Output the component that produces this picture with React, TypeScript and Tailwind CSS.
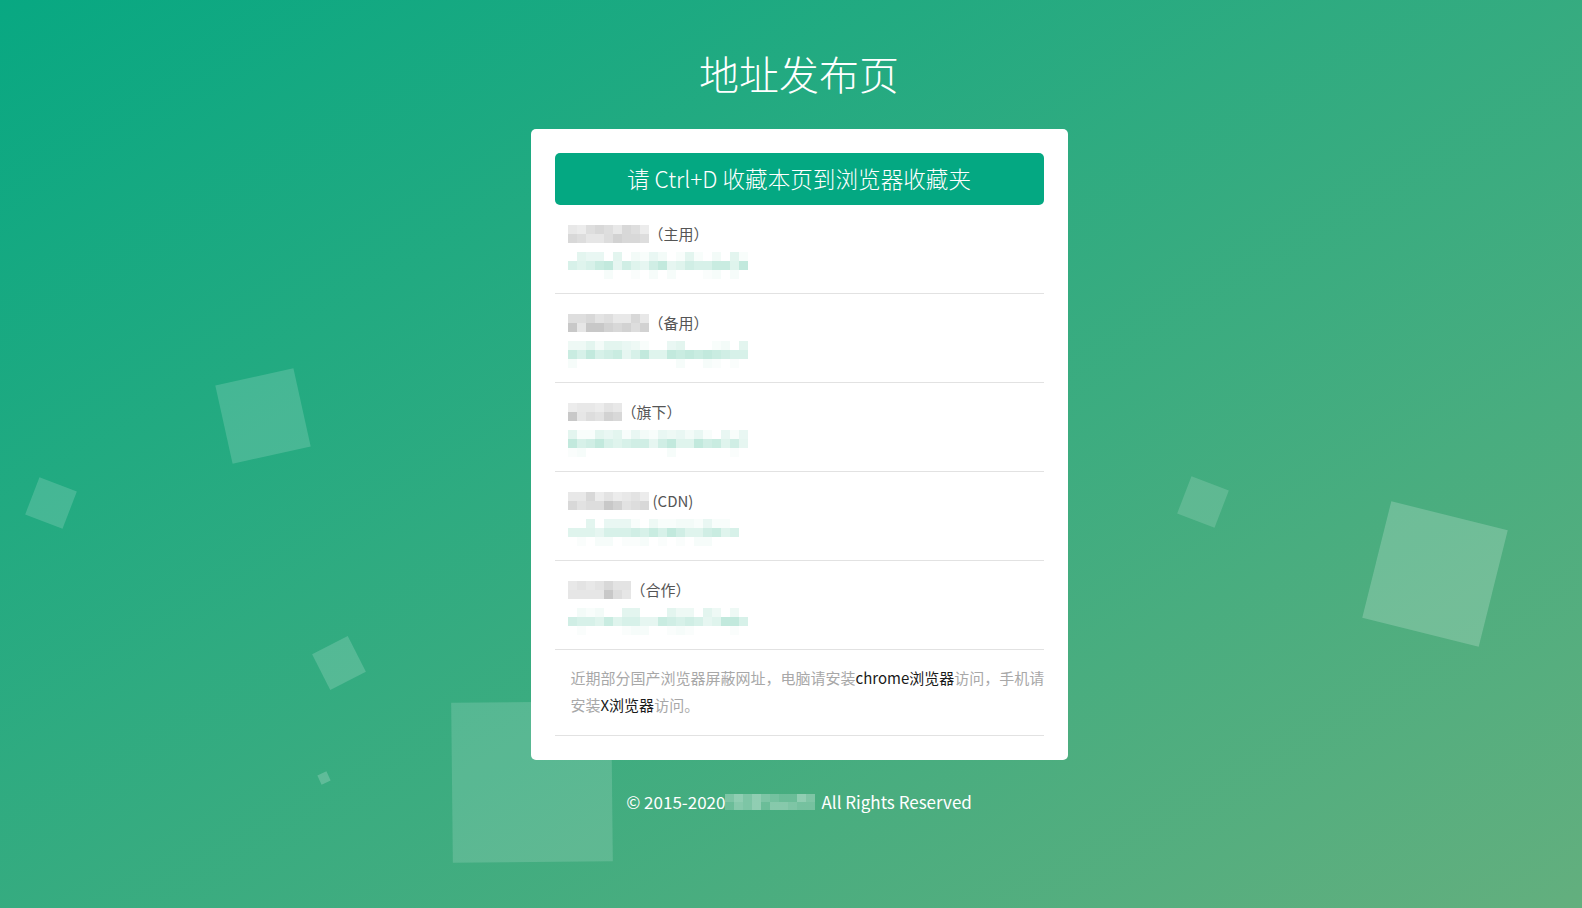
import React from "react";

const GRAY = [
  "bg-[#c8c8c8]",
  "bg-[#d2d2d2]",
  "bg-[#d8d8d8]",
  "bg-[#dddddd]",
  "bg-[#e2e2e2]",
  "bg-[#e6e6e6]",
];
const GRAY_LIGHT = ["bg-[#d8d8d8]", "bg-[#dedede]", "bg-[#e3e3e3]", "bg-[#e8e8e8]", "bg-[#ececec]"];
const TEAL = [
  "bg-[#c2e9dd]",
  "bg-[#c9ece1]",
  "bg-[#d0eee5]",
  "bg-[#d7f1e9]",
  "bg-[#dff4ed]",
  "bg-[#e6f6f1]",
];
const TEAL_LIGHT = ["bg-[#e3f5ef]", "bg-[#e9f7f3]", "bg-[#eef9f5]", "bg-[#f3fbf8]", "bg-[#f8fdfb]", "bg-white"];
const FAINT = ["bg-white", "bg-white", "bg-white", "bg-[#fafdfc]", "bg-[#f6fcfa]"];
const WHITE_T = ["bg-white/20", "bg-white/25", "bg-white/30", "bg-white/35", "bg-white/40"];

function rng(seed: number) {
  let s = seed;
  return () => {
    s = (s * 9301 + 49297) % 233280;
    return s / 233280;
  };
}

function Mosaic({
  cols,
  palettes,
  seed,
  cell = "w-[9px] h-[9px]",
}: {
  cols: number;
  palettes: string[][];
  seed: number;
  cell?: string;
}) {
  const r = rng(seed);
  return (
    <div className="flex flex-col shrink-0">
      {palettes.map((pal, ri) => (
        <div key={ri} className="flex">
          {Array.from({ length: cols }).map((_, ci) => {
            const cls = pal[Math.floor(r() * pal.length)];
            return <div key={ci} className={`${cell} ${cls}`} />;
          })}
        </div>
      ))}
    </div>
  );
}

const ROWS = [
  { label: "（主用）", lc: 9, uc: 20, seed: 11, cdn: false },
  { label: "（备用）", lc: 9, uc: 20, seed: 27, cdn: false },
  { label: "（旗下）", lc: 6, uc: 20, seed: 43, cdn: false },
  { label: "(CDN)", lc: 9, uc: 19, seed: 61, cdn: true },
  { label: "（合作）", lc: 7, uc: 20, seed: 87, cdn: false },
];

function Square({ cls }: { cls: string }) {
  return <div className={`absolute bg-white ${cls}`} />;
}

export default function App() {
  return (
    <div className="relative h-[908px] w-full overflow-hidden bg-[linear-gradient(to_bottom_right,#08a882,#63af7e)] font-['Noto_Sans_CJK_SC','Noto_Sans',sans-serif]">
      {/* decorative squares */}
      <Square cls="left-[223px] top-[376px] w-[80px] h-[80px] rotate-[-12.5deg] opacity-[0.16]" />
      <Square cls="left-[31px] top-[483px] w-[40px] h-[40px] rotate-[21deg] opacity-[0.16]" />
      <Square cls="left-[319px] top-[643px] w-[40px] h-[40px] rotate-[-27deg] opacity-[0.17]" />
      <Square cls="left-[319px] top-[773px] w-[10px] h-[10px] rotate-[-25deg] opacity-[0.2]" />
      <Square cls="left-[452px] top-[702px] w-[160px] h-[160px] rotate-[-0.6deg] opacity-[0.15]" />
      <Square cls="left-[1183px] top-[482px] w-[40px] h-[40px] rotate-[21deg] opacity-[0.15]" />
      <Square cls="left-[1375px] top-[514px] w-[120px] h-[120px] rotate-[14deg] opacity-[0.2]" />

      <div className="relative z-10 flex flex-col items-center pl-4 pt-[43px]">
        <h1 className="text-[40px] leading-[60px] font-light text-white">地址发布页</h1>

        <div className="mt-[26px] w-[537px] rounded-[5px] bg-white px-6 py-6">
          <div className="flex h-[52px] items-center justify-center rounded-[5px] bg-[#04a882] text-[22.6px] font-light text-white">
            请 Ctrl+D 收藏本页到浏览器收藏夹
          </div>

          {ROWS.map((row) => (
            <div key={row.seed} className="border-b border-[#e2e2e2] pt-[17px] pb-[14px] pl-[13px]">
              <div className="flex h-6 items-center">
                <Mosaic cols={row.lc} palettes={[GRAY_LIGHT, GRAY]} seed={row.seed} />
                <span className={`text-[15px] leading-6 text-[#555] ${row.cdn ? "ml-[4px]" : ""}`}>{row.label}</span>
              </div>
              <div className="mt-[6px] flex h-[27px] items-center">
                <Mosaic cols={row.uc} palettes={[TEAL_LIGHT, TEAL, FAINT]} seed={row.seed + 5} />
              </div>
            </div>
          ))}

          <div className="border-b border-[#e2e2e2] pt-[14px] pb-[17px] pl-[16px] text-[15px] leading-[27px] text-[#a8a8a8]">
            <div className="whitespace-nowrap">
              近期部分国产浏览器屏蔽网址，电脑请安装<span className="text-[#1a1a1a]">chrome浏览器</span>访问，手机请
            </div>
            <div className="whitespace-nowrap">
              安装<span className="text-[#1a1a1a]">X浏览器</span>访问。
            </div>
          </div>
        </div>

        <div className="mt-[30px] flex h-6 items-center text-[17px] text-white">
          <span>© 2015-2020</span>
          <Mosaic cols={10} palettes={[WHITE_T, WHITE_T]} seed={5} cell="w-[9px] h-[8px]" />
          <span className="ml-[6px]">All Rights Reserved</span>
        </div>
      </div>
    </div>
  );
}
